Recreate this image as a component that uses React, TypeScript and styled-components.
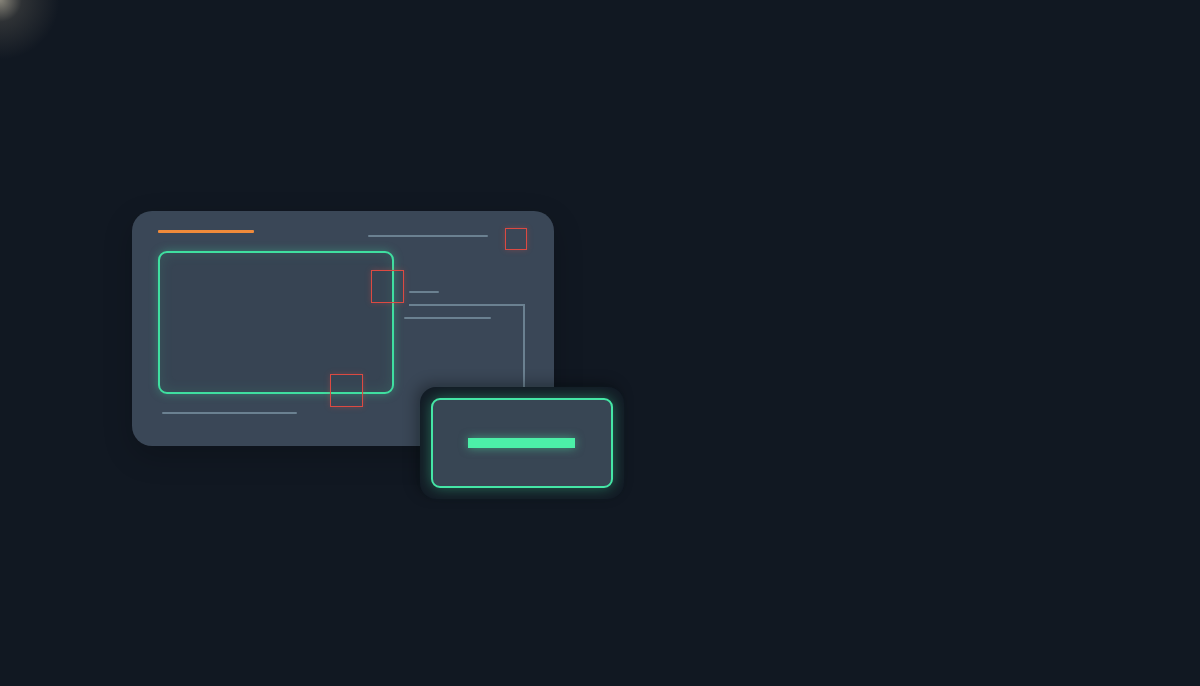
import React from "react";
import styled, { createGlobalStyle } from "styled-components";

const GlobalStyle = createGlobalStyle`
  html, body {
    margin: 0;
    padding: 0;
    background: #111822;
    font-family: "Inter", "Liberation Sans", sans-serif;
    overflow: hidden;
  }
`;

const Page = styled.div`
  width: 1200px;
  height: 686px;
  background: #111822;
  position: relative;
  overflow: hidden;
`;

// faint light leak in the top-left corner
const CornerGlow = styled.div`
  position: absolute;
  left: 0;
  top: 0;
  width: 70px;
  height: 70px;
  background: radial-gradient(
    circle at 0 0,
    rgba(215, 205, 180, 0.6) 0%,
    rgba(150, 140, 120, 0.22) 22%,
    rgba(17, 24, 34, 0) 60%
  );
`;

const MainCard = styled.div`
  position: absolute;
  left: 132px;
  top: 211px;
  width: 422px;
  height: 235px;
  border-radius: 20px;
  background: #3a4757;
  box-shadow: 0 10px 30px rgba(0, 0, 0, 0.2);
`;

type LineProps = { $x: number; $y: number; $w: number; $h?: number; $color?: string };

const Line = styled.div<LineProps>`
  position: absolute;
  left: ${(p) => p.$x}px;
  top: ${(p) => p.$y}px;
  width: ${(p) => p.$w}px;
  height: ${(p) => p.$h ?? 2}px;
  background: ${(p) => p.$color ?? "#6b8191"};
  border-radius: 1px;
`;

const Bracket = styled.div`
  position: absolute;
  left: 277px;
  top: 93px;
  width: 114px;
  height: 90px;
  border-top: 2px solid #6b8191;
  border-right: 2px solid #6b8191;
`;

const Frame = styled.div`
  position: absolute;
  left: 26px;
  top: 40px;
  width: 232px;
  height: 139px;
  border: 2px solid #3fdfa0;
  border-radius: 9px;
  background: #374453;
  box-shadow: 0 0 10px rgba(63, 223, 160, 0.35), inset 0 0 14px rgba(63, 223, 160, 0.12);
`;

type MarkerProps = { $x: number; $y: number; $size: number };

const Marker = styled.div<MarkerProps>`
  position: absolute;
  left: ${(p) => p.$x}px;
  top: ${(p) => p.$y}px;
  width: ${(p) => p.$size}px;
  height: ${(p) => p.$size}px;
  box-sizing: border-box;
  border: 1.5px solid #dc4a42;
  box-shadow: 0 0 6px rgba(220, 74, 66, 0.3);
`;

const Backdrop = styled.div`
  position: absolute;
  left: 420px;
  top: 387px;
  padding: 11px;
  border-radius: 16px;
  background: #131b25;
  box-shadow: -4px -4px 14px rgba(0, 0, 0, 0.3);
`;

const ActionCard = styled.div`
  width: 178px;
  height: 86px;
  border: 2px solid #45e6a6;
  border-radius: 9px;
  background: #384654;
  display: flex;
  align-items: center;
  justify-content: center;
  box-shadow: 0 0 14px rgba(69, 230, 166, 0.4);
`;

const ActionBar = styled.div`
  width: 107px;
  height: 10px;
  background: #4cf0a8;
  box-shadow: 0 0 10px rgba(76, 240, 168, 0.5);
  margin-left: -2px;
`;

export default function App() {
  return (
    <>
      <GlobalStyle />
      <Page>
        <CornerGlow />
        <MainCard>
          <Line $x={26} $y={19} $w={96} $h={3} $color="#f08a3a" />
          <Line $x={236} $y={24} $w={120} />
          <Marker $x={373} $y={17} $size={22} />
          <Frame />
          <Marker $x={239} $y={59} $size={33} />
          <Marker $x={198} $y={163} $size={33} />
          <Line $x={277} $y={80} $w={30} />
          <Bracket />
          <Line $x={272} $y={106} $w={87} />
          <Line $x={30} $y={201} $w={135} />
        </MainCard>
        <Backdrop>
          <ActionCard>
            <ActionBar />
          </ActionCard>
        </Backdrop>
      </Page>
    </>
  );
}
